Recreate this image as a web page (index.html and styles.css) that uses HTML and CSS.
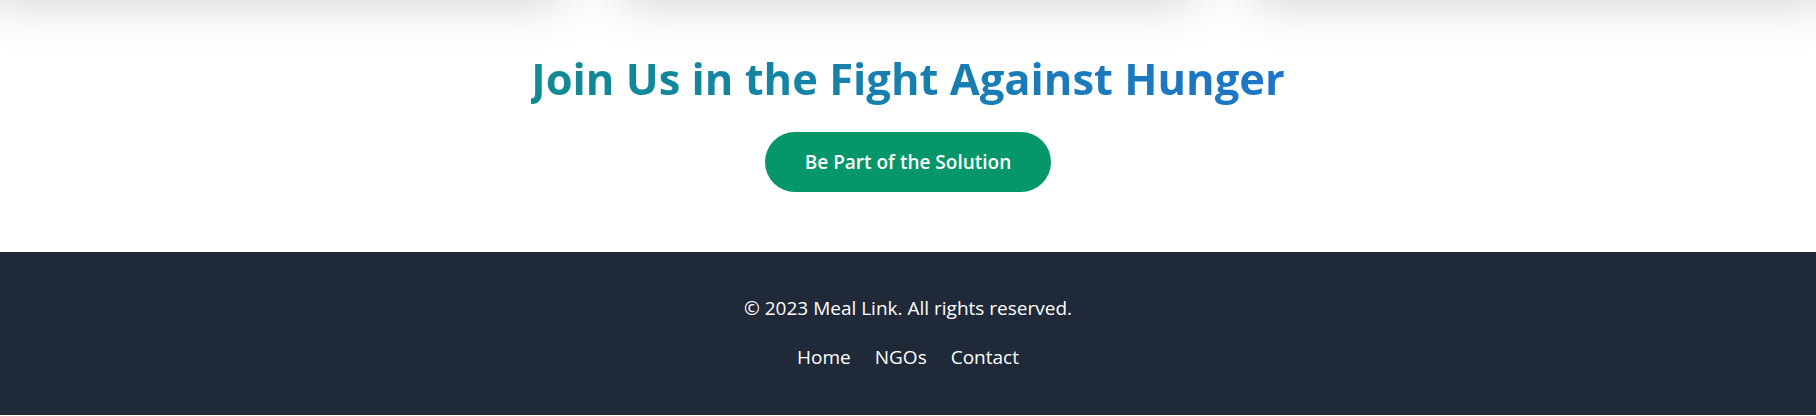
FILE: index.html
```html
<!DOCTYPE html>
<html lang="en">
<head>
<meta charset="utf-8">
<title>Meal Link</title>
<link rel="stylesheet" href="styles.css">
</head>
<body>
<section class="features">
  <div class="card-grid">
    <div class="card"></div>
    <div class="card"></div>
    <div class="card"></div>
  </div>
</section>
<section class="cta">
  <h2 class="cta-title"><span class="gradient-text">Join Us in the Fight Against Hunger</span></h2>
  <a class="cta-button" href="#">Be Part of the Solution</a>
</section>
<footer class="site-footer">
  <p class="copyright">© 2023 Meal Link. All rights reserved.</p>
  <nav class="footer-nav">
    <a href="#">Home</a>
    <a href="#">NGOs</a>
    <a href="#">Contact</a>
  </nav>
</footer>
</body>
</html>
```

FILE: styles.css
```css
* { box-sizing: border-box; }
html, body { margin: 0; padding: 0; background: #ffffff; }
body { font-family: "Open Sans", "Noto Sans", sans-serif; overflow: hidden; }

.features { margin-top: -208px; height: 200px; margin-bottom: 8px; }
.card-grid {
  display: grid;
  grid-template-columns: repeat(3, 1fr);
  gap: 32px;
  margin: 0 -24px;
}
.card {
  height: 200px;
  background: #ffffff;
  border-radius: 12px;
  box-shadow: 0 20px 50px -12px rgba(0,0,0,0.2);
}

.cta {
  display: flex;
  flex-direction: column;
  align-items: center;
  padding: 55px 0 60px;
}
.cta-title {
  margin: 0 0 29px;
  font-size: 43.5px;
  line-height: 48px;
  font-weight: 700;
}
.gradient-text {
  background: linear-gradient(90deg, #0f8b92, #1e74ca);
  -webkit-background-clip: text;
  background-clip: text;
  color: transparent;
}
.cta-button {
  display: inline-block;
  background: #059669;
  color: #ffffff;
  text-decoration: none;
  font-size: 19px;
  line-height: 28px;
  font-weight: 600;
  padding: 16px 40px;
  border-radius: 9999px;
}

.site-footer {
  background: #1f2937;
  color: #ffffff;
  text-align: center;
  padding: 42px 0 44px;
  font-size: 19px;
  line-height: 28px;
}
.copyright { margin: 0 0 21px; }
.footer-nav {
  display: flex;
  justify-content: center;
  gap: 24px;
}
.footer-nav a { color: #ffffff; text-decoration: none; }
```
